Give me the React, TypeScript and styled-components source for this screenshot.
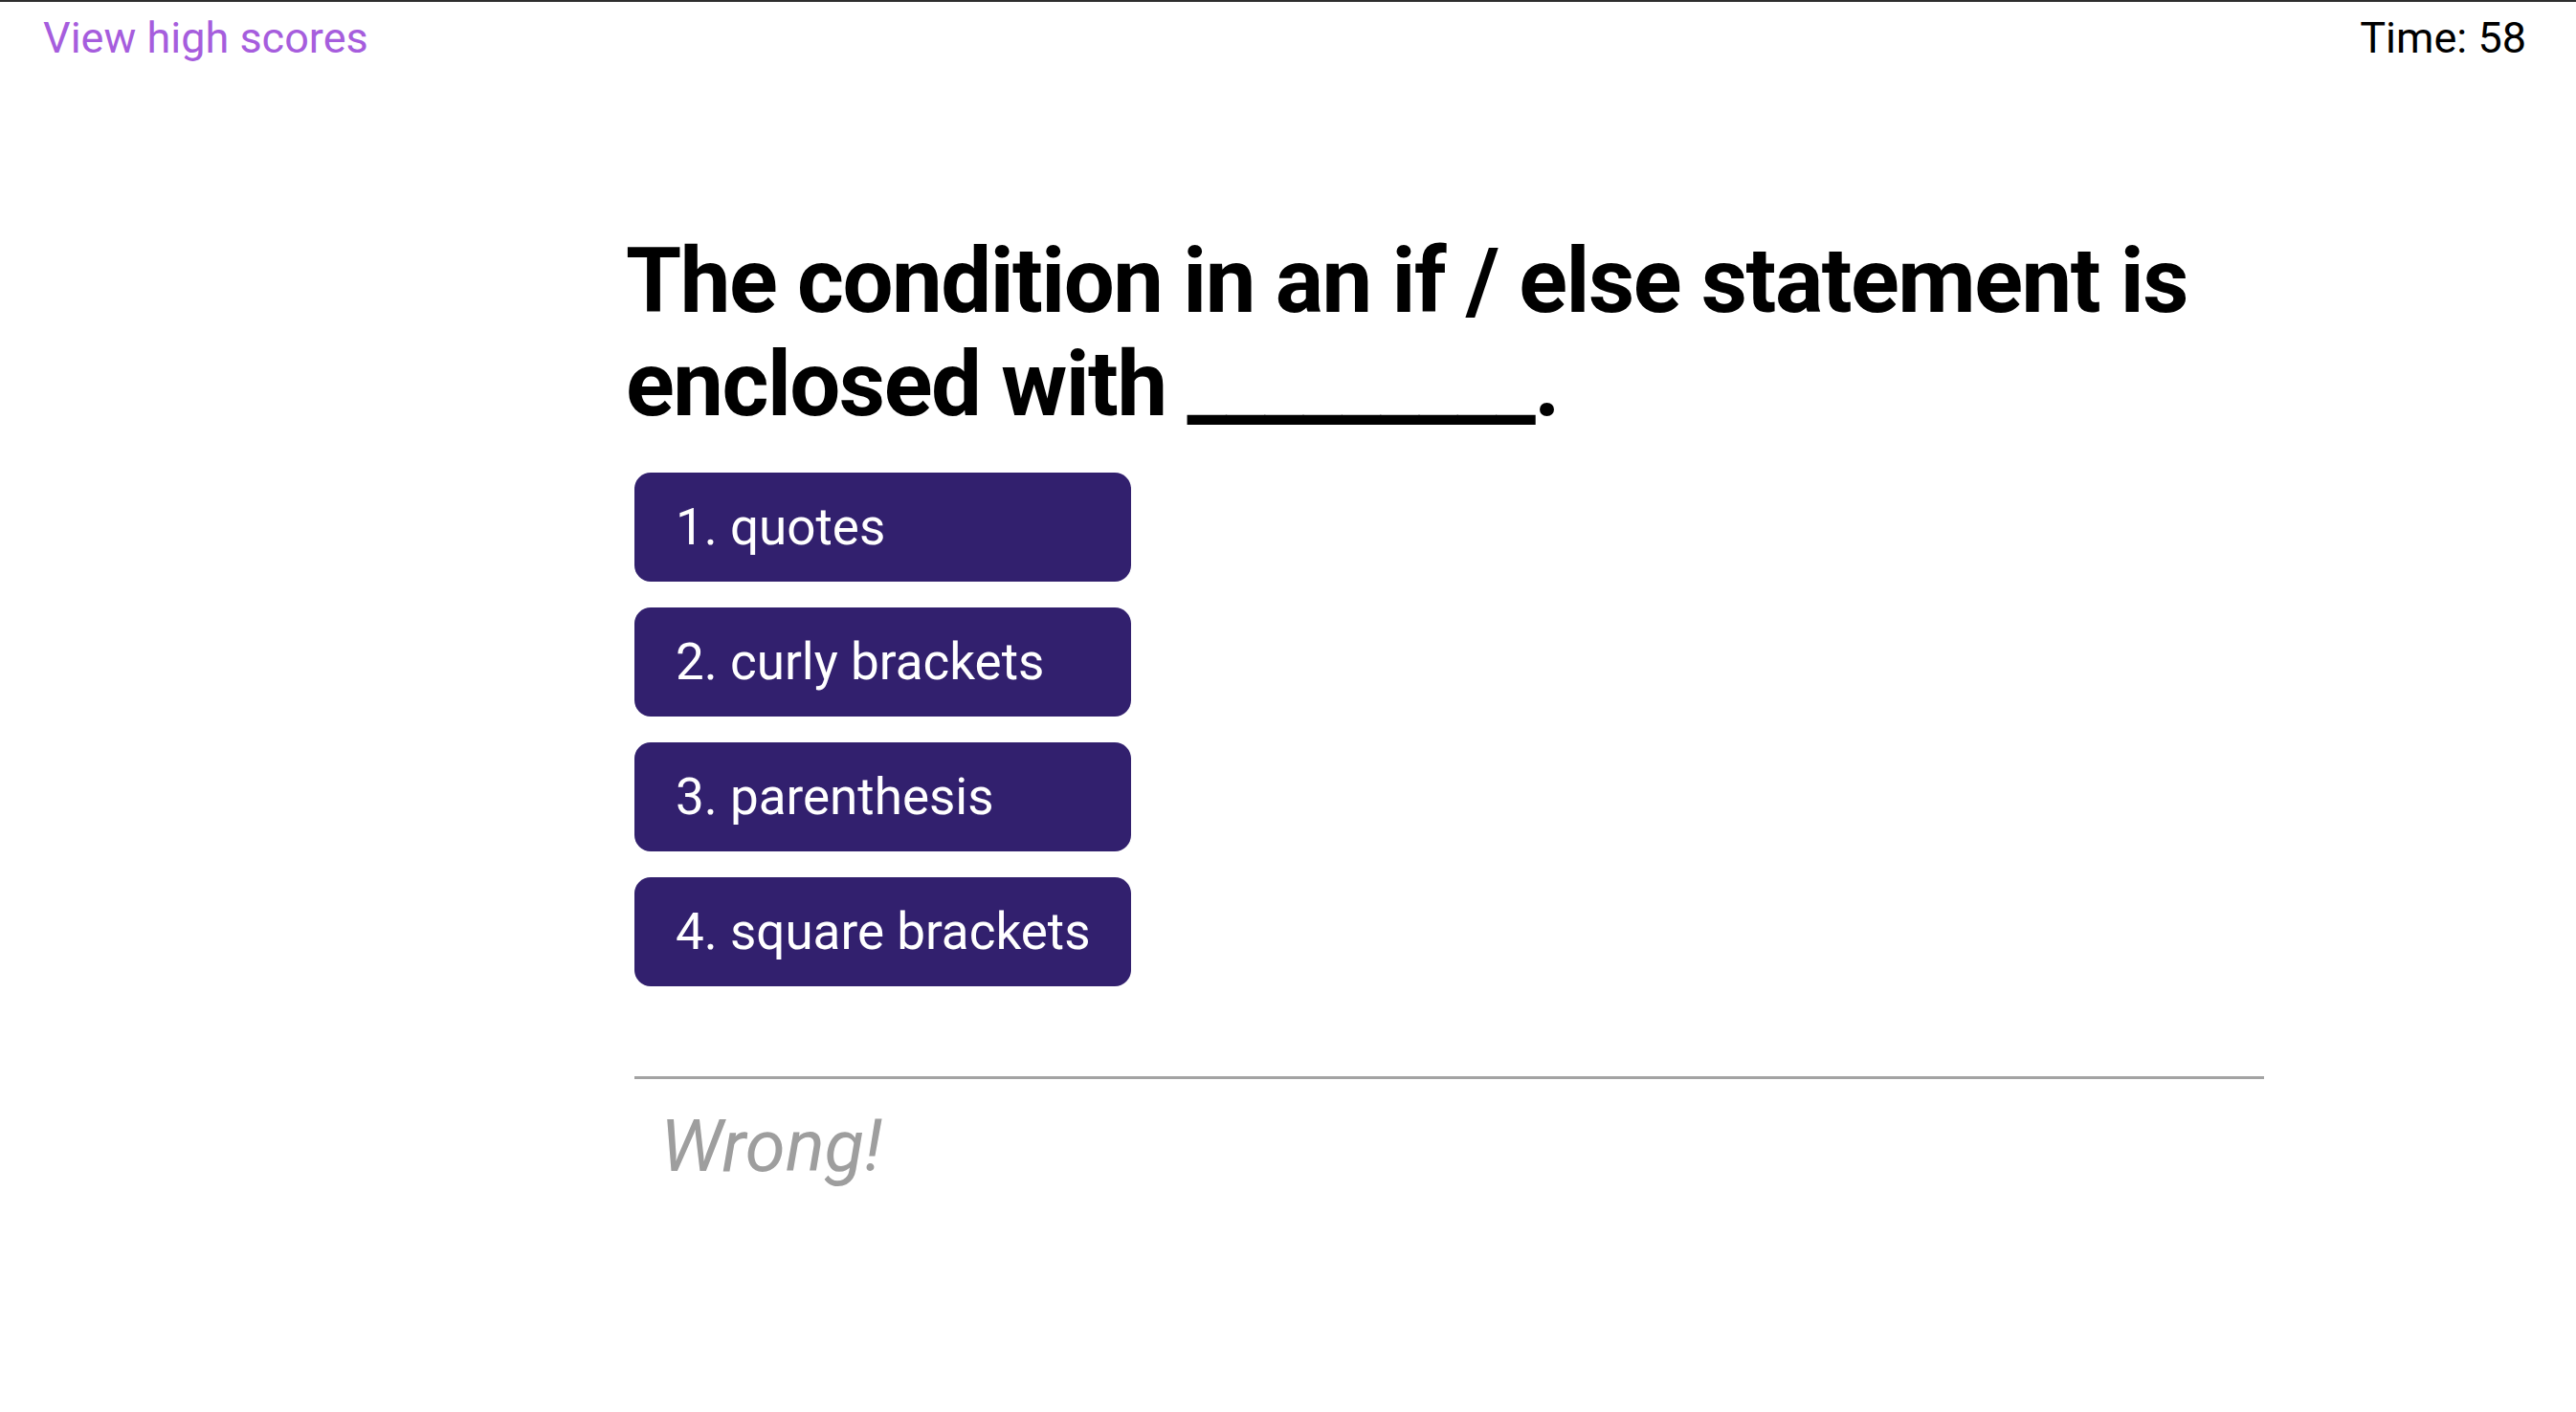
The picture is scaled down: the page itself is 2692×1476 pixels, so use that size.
import React from "react";
import styled, { createGlobalStyle } from "styled-components";

const Global = createGlobalStyle`
  html, body {
    margin: 0;
    padding: 0;
    background: #ffffff;
  }
  body {
    font-family: Roboto, "Noto Sans", "Liberation Sans", sans-serif;
    color: #000;
  }
`;

const Page = styled.div`
  min-height: 1476px;
  border-top: 2px solid #2e2e2e;
  box-sizing: border-box;
`;

const Header = styled.header`
  display: flex;
  justify-content: space-between;
  align-items: baseline;
  padding: 11px 52px 0 45px;
  font-size: 45px;
`;

const HighScores = styled.a`
  color: #a65ddd;
  text-decoration: none;
  cursor: pointer;
`;

const Timer = styled.div`
  color: #000;
`;

const Main = styled.main`
  width: 1712px;
  margin: 174px 0 0 654px;
`;

const Question = styled.h1`
  margin: 0;
  font-size: 94px;
  line-height: 108px;
  font-weight: 700;
  letter-spacing: -1.5px;
`;

const Choices = styled.ol`
  list-style: none;
  margin: 38px 0 0 9px;
  padding: 0;
  display: flex;
  flex-direction: column;
  gap: 27px;
`;

const Choice = styled.button`
  width: 519px;
  height: 114px;
  display: flex;
  align-items: center;
  padding: 0 0 0 43px;
  border: none;
  border-radius: 17px;
  background: #32206e;
  color: #ffffff;
  font-family: inherit;
  font-size: 53px;
  text-align: left;
  cursor: pointer;
`;

const Divider = styled.hr`
  margin: 94px 0 0 9px;
  border: none;
  height: 3px;
  background: #a3a3a3;
`;

const Feedback = styled.p`
  margin: 25px 0 0 36px;
  font-size: 76px;
  font-style: italic;
  color: #9e9e9e;
`;

const choices = ["quotes", "curly brackets", "parenthesis", "square brackets"];

export default function App() {
  return (
    <>
      <Global />
      <Page>
        <Header>
          <HighScores>View high scores</HighScores>
          <Timer>Time: 58</Timer>
        </Header>
        <Main>
          <Question>
            The condition in an if / else statement is enclosed with _________.
          </Question>
          <Choices>
            {choices.map((c, i) => (
              <li key={c}>
                <Choice>
                  {i + 1}. {c}
                </Choice>
              </li>
            ))}
          </Choices>
          <Divider />
          <Feedback>Wrong!</Feedback>
        </Main>
      </Page>
    </>
  );
}
